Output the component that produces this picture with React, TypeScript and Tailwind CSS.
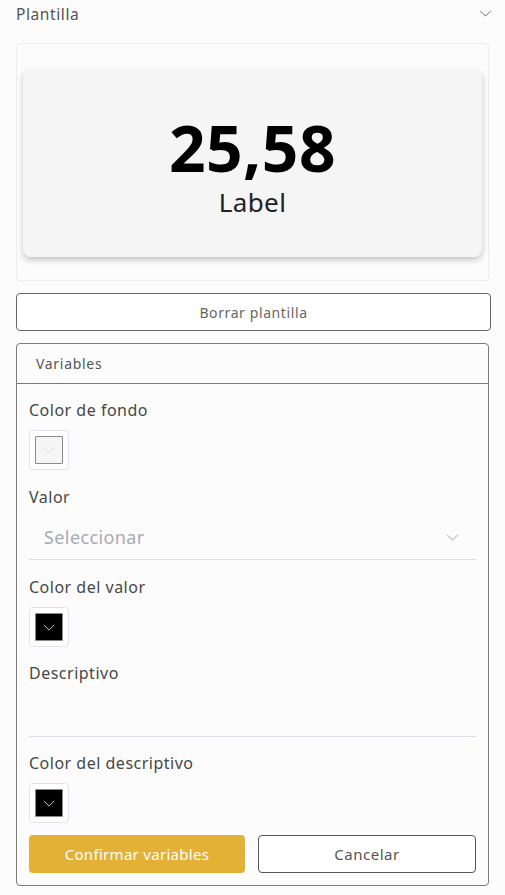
import React from "react";

const Chevron = ({ className = "", color = "#777" }: { className?: string; color?: string }) => (
  <svg viewBox="0 0 14 8" className={className} fill="none" stroke={color} strokeWidth="1.1">
    <path d="M1 1l6 6 6-6" />
  </svg>
);

const Swatch = ({ fill, chev }: { fill: string; chev: string }) => (
  <div className="w-10 h-10 rounded-[4px] border border-[#e3e3ec] flex items-center justify-center bg-white">
    <div className={`w-7 h-7 border border-[#8a8a8a] rounded-[1px] flex items-center justify-center ${fill}`}>
      <Chevron className="w-[12px] h-[7px]" color={chev} />
    </div>
  </div>
);

export default function App() {
  return (
    <div
      className="min-h-[895px] bg-[#fcfcfc] text-[#474747]"
      style={{ fontFamily: '"Noto Sans", Arial, sans-serif' }}
    >
      <div className="h-[27px] pl-4 pr-[13px] flex items-center justify-between">
        <span className="text-[15.5px] tracking-[0.6px] text-[#555] leading-[26px]">Plantilla</span>
        <Chevron className="w-[13px] h-[7px] -mt-[1px]" color="#666" />
      </div>

      <div className="mx-4 mt-4 h-[238px] border border-[#ececec] rounded-[4px] bg-[#fcfcfc] px-[6px] pt-[25px]">
        <div className="h-[188px] rounded-[8px] bg-[#f5f5f5] shadow-[0_3px_6px_rgba(0,0,0,0.22)] flex flex-col items-center">
          <div className="mt-[44px] text-[64px] leading-[70px] font-bold text-black tracking-[0.5px]">25,58</div>
          <div className="text-[26px] leading-[30px] text-[#222] mt-[4px] tracking-[0.4px]">Label</div>
        </div>
      </div>

      <button className="mx-4 mt-3 w-[475px] h-[38px] border border-[#666] rounded-[4px] bg-white text-[14px] tracking-[0.6px] text-[#666] flex items-center justify-center">
        Borrar plantilla
      </button>

      <div className="mx-4 mt-3 border border-[#7a7a7a] rounded-[4px] bg-[#fcfcfc]">
        <div className="h-[40px] border-b border-[#7a7a7a] flex items-center pl-[19px] text-[14px] tracking-[0.7px] text-[#555]">
          Variables
        </div>
        <div className="px-3 pb-3 text-[16px] tracking-[0.5px]">
          <div className="mt-[14px] leading-6">Color de fondo</div>
          <div className="mt-2">
            <Swatch fill="bg-[#f5f5f5]" chev="#dcdcdc" />
          </div>

          <div className="mt-[15px] leading-6">Valor</div>
          <div className="h-[51px] border-b border-[#dedee6] flex items-start justify-between pt-[16px] pl-[15px] pr-[17px]">
            <span className="text-[18px] leading-6 text-[#a9a9b2] tracking-[0.4px]">Seleccionar</span>
            <Chevron className="w-[13px] h-[7px] mt-[9px]" color="#9a9aa4" />
          </div>

          <div className="mt-[15px] leading-6">Color del valor</div>
          <div className="mt-2">
            <Swatch fill="bg-black" chev="#cfcfcf" />
          </div>

          <div className="mt-[14px] leading-6">Descriptivo</div>
          <div className="h-[52px] border-b border-[#dedee6]" />

          <div className="mt-[14px] leading-6">Color del descriptivo</div>
          <div className="mt-2">
            <Swatch fill="bg-black" chev="#cfcfcf" />
          </div>

          <div className="mt-3 flex gap-[13px]">
            <button className="w-[216px] h-[38px] rounded-[4px] bg-[#e2b136] text-white text-[15px] tracking-[0.3px]">
              Confirmar variables
            </button>
            <button className="flex-1 h-[38px] rounded-[4px] border border-[#555] bg-white text-[15px] tracking-[0.5px] text-[#555]">
              Cancelar
            </button>
          </div>
        </div>
      </div>
    </div>
  );
}
